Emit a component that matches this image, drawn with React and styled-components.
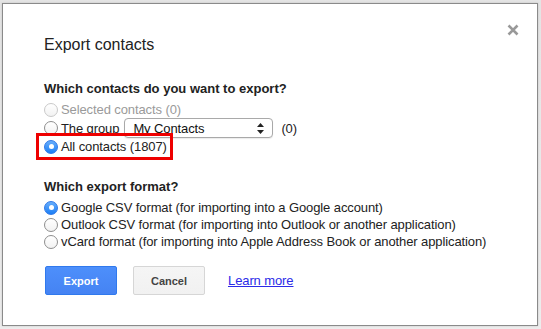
import React from "react"
import styled, { createGlobalStyle } from "styled-components"

const GlobalStyle = createGlobalStyle`
	html, body {
		margin: 0;
		padding: 0;
		background: #e9e9e9;
		font-family: "Liberation Sans", Arial, sans-serif;
	}
`

const Page = styled.div`
	width: 541px;
	height: 329px;
	box-sizing: border-box;
	padding: 3px 3px 3px 2px;
	background: linear-gradient(#e4e4e4, #ededed);
`

const Dialog = styled.div`
	position: relative;
	box-sizing: border-box;
	width: 536px;
	height: 323px;
	background: #fff;
	border: 1px solid #8a8a8a;
	box-shadow: 0 0 2px rgba(0, 0, 0, 0.15);
	padding: 31px 0 0 41px;
	color: #222;
`

const Close = styled.button`
	position: absolute;
	top: 16px;
	right: 14px;
	width: 20px;
	height: 20px;
	padding: 0;
	border: 0;
	background: none;
	cursor: pointer;
	display: flex;
	align-items: center;
	justify-content: center;
`

const Title = styled.h1`
	margin: 0;
	font-size: 16px;
	line-height: 20px;
	font-weight: normal;
	color: #222;
`

const Heading = styled.div`
	margin-top: ${(p) => p.$top}px;
	font-size: 13px;
	line-height: 17px;
	font-weight: bold;
	color: #222;
`

const Options = styled.div`
	margin-top: 4px;
	display: flex;
	flex-direction: column;
`

const Row = styled.label`
	position: relative;
	display: flex;
	align-items: center;
	align-self: flex-start;
	height: ${(p) => p.$height || 17}px;
	font-size: 13px;
	line-height: 17px;
	letter-spacing: -0.1px;
	color: ${(p) => (p.$disabled ? "#9a9a9a" : "#222")};

	${(p) =>
		p.$highlight &&
		`
		&::after {
			content: "";
			position: absolute;
			top: -5px;
			bottom: -5px;
			left: -8px;
			right: -6px;
			border: 3px solid #ee0000;
			pointer-events: none;
		}
	`}
`

const Radio = styled.span`
	box-sizing: border-box;
	flex: none;
	width: 14px;
	height: 14px;
	margin-right: 3px;
	border-radius: 50%;
	display: flex;
	align-items: center;
	justify-content: center;
	border: 1px solid ${(p) => (p.$checked ? "#2f78e8" : p.$disabled ? "#c9c9c9" : "#8e8e8e")};
	background: ${(p) =>
		p.$checked
			? "linear-gradient(#68aefb, #1b7ef6)"
			: "linear-gradient(#ffffff, #f2f2f2)"};

	&::after {
		content: "";
		display: ${(p) => (p.$checked ? "block" : "none")};
		width: 5px;
		height: 5px;
		border-radius: 50%;
		background: #fff;
	}
`

const SelectBox = styled.div`
	box-sizing: border-box;
	width: 149px;
	height: 20px;
	margin: 0 8px 0 5px;
	padding: 0 8px;
	display: flex;
	align-items: center;
	justify-content: space-between;
	border: 1px solid #a9a9a9;
	border-radius: 4px;
	background: #fff;
	box-shadow: 0 1px 1px rgba(0, 0, 0, 0.08);
	font-size: 13px;
	color: #111;
`

const Buttons = styled.div`
	margin-top: 16px;
	margin-left: 1px;
	display: flex;
	align-items: center;
`

const Button = styled.button`
	box-sizing: border-box;
	width: 72px;
	height: 29px;
	margin-right: 16px;
	padding: 0;
	border-radius: 2px;
	font-family: "Liberation Sans", Arial, sans-serif;
	font-size: 11px;
	font-weight: bold;
	cursor: pointer;
	border: 1px solid ${(p) => (p.$primary ? "#3079ed" : "#d6d6d6")};
	color: ${(p) => (p.$primary ? "#fff" : "#444")};
	background: ${(p) =>
		p.$primary
			? "linear-gradient(#4d8ffb, #4583f3)"
			: "linear-gradient(#f5f5f5, #f1f1f1)"};
`

const LearnMore = styled.a`
	margin-left: 7px;
	font-size: 13px;
	letter-spacing: -0.1px;
	color: #2b2be8;
	text-decoration: underline;
`

function RadioRow({ checked, disabled, highlight, height, children }) {
	return (
		<Row $disabled={disabled} $highlight={highlight} $height={height}>
			<Radio $checked={checked} $disabled={disabled} />
			{children}
		</Row>
	)
}

export default function App() {
	return (
		<Page>
			<GlobalStyle />
			<Dialog>
				<Close aria-label="Close">
					<svg width="12" height="12" viewBox="0 0 12 12">
						<path
							d="M1.5 1.5 L10.5 10.5 M10.5 1.5 L1.5 10.5"
							stroke="#999"
							strokeWidth="2.6"
						/>
					</svg>
				</Close>

				<Title>Export contacts</Title>

				<Heading $top={25}>Which contacts do you want to export?</Heading>
				<Options>
					<RadioRow disabled>Selected contacts (0)</RadioRow>
					<RadioRow height={20}>
						The group
						<SelectBox>
							My Contacts
							<svg width="7" height="11" viewBox="0 0 7 11">
								<path d="M3.5 0 L7 4 L0 4 Z M0 7 L7 7 L3.5 11 Z" fill="#222" />
							</svg>
						</SelectBox>
						(0)
					</RadioRow>
					<RadioRow checked highlight>
						All contacts (1807)
					</RadioRow>
				</Options>

				<Heading $top={23}>Which export format?</Heading>
				<Options>
					<RadioRow checked>
						Google CSV format (for importing into a Google account)
					</RadioRow>
					<RadioRow>
						Outlook CSV format (for importing into Outlook or another application)
					</RadioRow>
					<RadioRow>
						vCard format (for importing into Apple Address Book or another
						application)
					</RadioRow>
				</Options>

				<Buttons>
					<Button $primary>Export</Button>
					<Button>Cancel</Button>
					<LearnMore href="#">Learn more</LearnMore>
				</Buttons>
			</Dialog>
		</Page>
	)
}
